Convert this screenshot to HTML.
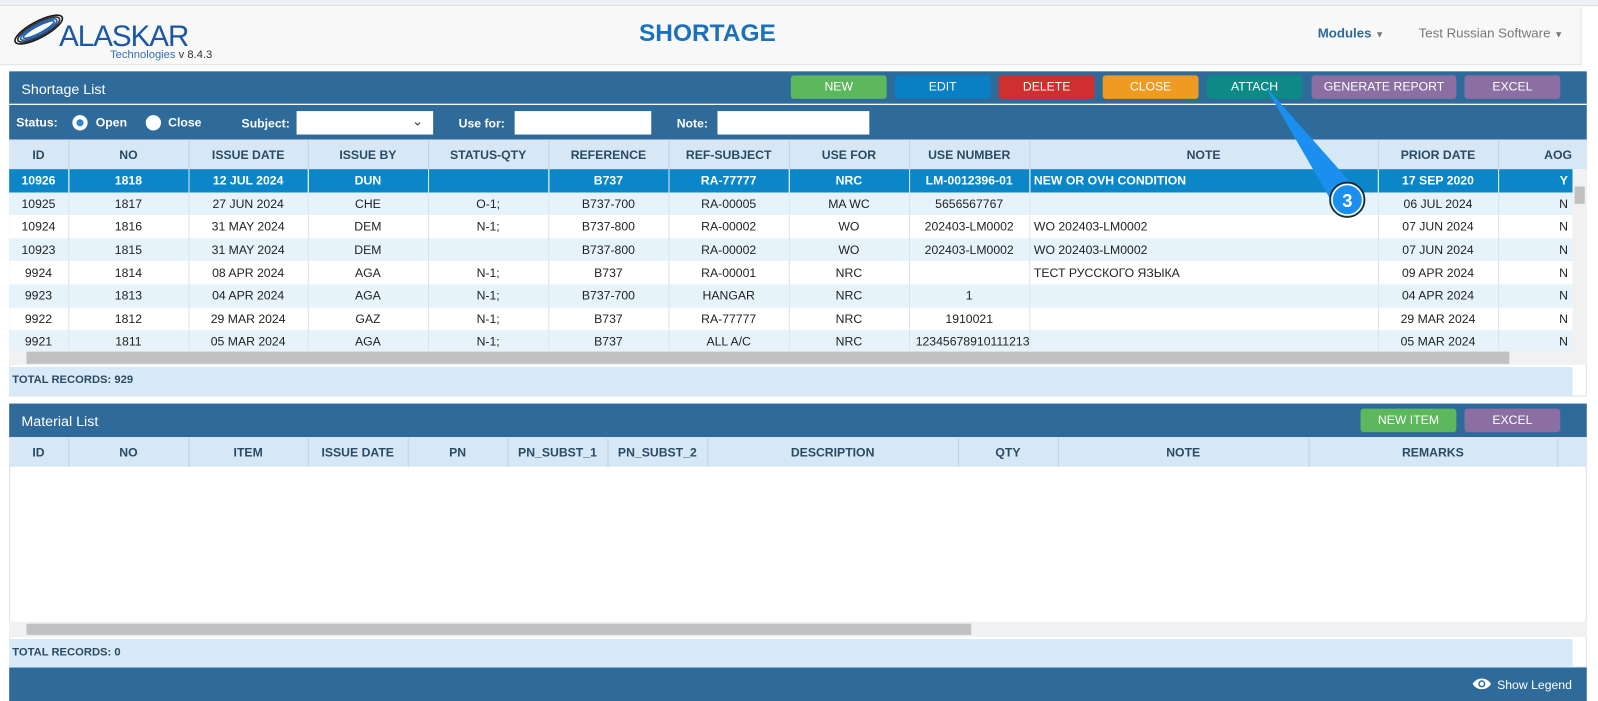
<!DOCTYPE html>
<html><head><meta charset="utf-8"><style>
*{box-sizing:border-box;margin:0;padding:0}
body{width:1598px;height:701px;background:#fff;font-family:"Liberation Sans",Arial,sans-serif;position:relative;overflow:hidden}
#w{position:absolute;left:0;top:0;width:1568px;height:688px;transform:scale(1.01913);transform-origin:0 0}
.abs{position:absolute}
.top{left:0;top:0;width:1568px;height:6px;background:#eef2f6;border-bottom:1px solid #d8dde2}
.hdr{left:0;top:7px;width:1552px;height:57px;background:#f8f8f8;border-bottom:1px solid #e2e2e2;border-right:1px solid #e2e2e2}
.bar{background:#2e6a9a;color:#fff}
.btn{position:absolute;height:23px;border-radius:3px;color:#fff;font-size:12px;text-align:center;line-height:22px}
table{border-collapse:collapse;table-layout:fixed;position:absolute;font-size:12px}
th{background:#d6e8f5;color:#2a4a66;font-weight:bold;border-right:1px solid #bcd0df;text-align:center;height:28px;font-size:12px}
td{text-align:center;border-right:1px solid #d5e3ec;height:22.6px;color:#222;white-space:nowrap;overflow:hidden}
tr.sel td{background:#0b87c9;color:#fff;font-weight:bold}
tr.a td{background:#e6f3fa}
tr.b td{background:#fff}
td.l{text-align:left;padding-left:4px}
</style></head><body><div id="w">
<div class="abs top"></div>
<div class="abs hdr"></div>
<svg class="abs" style="left:8px;top:12px" width="60" height="36" viewBox="0 0 60 36">
<g fill="none" stroke-width="1.6">
<ellipse cx="30" cy="17" rx="26" ry="8" transform="rotate(-28 30 17)" stroke="#1d1d1d"/>
<ellipse cx="30" cy="17" rx="23" ry="6.5" transform="rotate(-28 30 17)" stroke="#333"/>
<ellipse cx="30" cy="17" rx="20" ry="5" transform="rotate(-28 30 17)" stroke="#1f5fae"/>
<ellipse cx="30" cy="17" rx="17" ry="3.5" transform="rotate(-28 30 17)" stroke="#1f5fae"/>
</g></svg>
<div class="abs" style="left:58px;top:20px;font-size:29px;color:#1b57a6;letter-spacing:-1px">ALASKAR</div>
<div class="abs" style="left:108px;top:48px;font-size:11px;color:#3a6fb0">Technologies <span style="color:#333;font-size:11px">v 8.4.3</span></div>
<div class="abs" style="left:627px;top:19px;font-size:24px;font-weight:bold;color:#1c72b8">SHORTAGE</div>
<div class="abs" style="left:1293px;top:25px;font-size:13px;font-weight:bold;color:#2e6a9a">Modules <span style="font-size:9px;color:#777">▼</span></div>
<div class="abs" style="left:1392px;top:25px;font-size:13px;color:#777">Test Russian Software <span style="font-size:9px">▼</span></div>

<div class="abs bar" style="left:9px;top:70px;width:1548px;height:32px;border-bottom:1px solid #6f9cc0"></div>
<div class="abs" style="left:21px;top:79px;color:#fff;font-size:14px">Shortage List</div>
<div class="btn" style="left:776px;top:74px;width:94px;background:#5cb85c">NEW</div>
<div class="btn" style="left:878px;top:74px;width:94px;background:#0a7fc4">EDIT</div>
<div class="btn" style="left:980px;top:74px;width:94px;background:#cf2f2f">DELETE</div>
<div class="btn" style="left:1082px;top:74px;width:94px;background:#ef9a21">CLOSE</div>
<div class="btn" style="left:1184px;top:74px;width:94px;background:#0e8a86">ATTACH</div>
<div class="btn" style="left:1287px;top:74px;width:142px;background:#8b6fa3">GENERATE REPORT</div>
<div class="btn" style="left:1437px;top:74px;width:94px;background:#8b6fa3">EXCEL</div>
<div class="abs bar" style="left:9px;top:103px;width:1548px;height:34px"></div>
<div class="abs" style="left:16px;top:113px;color:#fff;font-size:12px;font-weight:bold">Status:</div>
<div class="abs" style="left:71px;top:113px;width:15px;height:15px;border-radius:50%;background:#fff"><div style="margin:4px;width:7px;height:7px;border-radius:50%;background:#2f87c9"></div></div>
<div class="abs" style="left:94px;top:113px;color:#fff;font-size:12px;font-weight:bold">Open</div>
<div class="abs" style="left:143px;top:113px;width:15px;height:15px;border-radius:50%;background:#fff"></div>
<div class="abs" style="left:165px;top:113px;color:#fff;font-size:12px;font-weight:bold">Close</div>
<div class="abs" style="left:237px;top:114px;color:#fff;font-size:12px;font-weight:bold">Subject:</div>
<div class="abs" style="left:291px;top:109px;width:134px;height:23px;background:#fff"><span style="position:absolute;right:10px;top:2px;color:#444;font-size:13px">⌄</span></div>
<div class="abs" style="left:450px;top:114px;color:#fff;font-size:12px;font-weight:bold">Use for:</div>
<div class="abs" style="left:505px;top:109px;width:134px;height:23px;background:#fff"></div>
<div class="abs" style="left:664px;top:114px;color:#fff;font-size:12px;font-weight:bold">Note:</div>
<div class="abs" style="left:704px;top:109px;width:149px;height:23px;background:#fff"></div>

<div class="abs" style="left:9px;top:137px;width:1548px;height:252px;background:#fff;border:1px solid #dde"></div>
<table style="left:9px;top:138px;width:1534px">
<colgroup><col style="width:58px"><col style="width:118px"><col style="width:117px"><col style="width:118px"><col style="width:118px"><col style="width:118px"><col style="width:118px"><col style="width:118px"><col style="width:118px"><col style="width:342px"><col style="width:118px"><col style="width:73px"></colgroup>
<tr><th>ID</th><th>NO</th><th>ISSUE DATE</th><th>ISSUE BY</th><th>STATUS-QTY</th><th>REFERENCE</th><th>REF-SUBJECT</th><th>USE FOR</th><th>USE NUMBER</th><th>NOTE</th><th>PRIOR DATE</th><th style="text-align:right;padding-right:0">AOG</th></tr>
<tr class="sel"><td>10926</td><td>1818</td><td>12 JUL 2024</td><td>DUN</td><td></td><td>B737</td><td>RA-77777</td><td>NRC</td><td>LM-0012396-01</td><td class="l">NEW OR OVH CONDITION</td><td>17 SEP 2020</td><td style="text-align:right;padding-right:4px">Y</td></tr>
<tr class="a"><td>10925</td><td>1817</td><td>27 JUN 2024</td><td>CHE</td><td>O-1;</td><td>B737-700</td><td>RA-00005</td><td>MA WC</td><td>5656567767</td><td class="l"></td><td>06 JUL 2024</td><td style="text-align:right;padding-right:4px">N</td></tr>
<tr class="b"><td>10924</td><td>1816</td><td>31 MAY 2024</td><td>DEM</td><td>N-1;</td><td>B737-800</td><td>RA-00002</td><td>WO</td><td>202403-LM0002</td><td class="l">WO 202403-LM0002</td><td>07 JUN 2024</td><td style="text-align:right;padding-right:4px">N</td></tr>
<tr class="a"><td>10923</td><td>1815</td><td>31 MAY 2024</td><td>DEM</td><td></td><td>B737-800</td><td>RA-00002</td><td>WO</td><td>202403-LM0002</td><td class="l">WO 202403-LM0002</td><td>07 JUN 2024</td><td style="text-align:right;padding-right:4px">N</td></tr>
<tr class="b"><td>9924</td><td>1814</td><td>08 APR 2024</td><td>AGA</td><td>N-1;</td><td>B737</td><td>RA-00001</td><td>NRC</td><td></td><td class="l">ТЕСТ РУССКОГО ЯЗЫКА</td><td>09 APR 2024</td><td style="text-align:right;padding-right:4px">N</td></tr>
<tr class="a"><td>9923</td><td>1813</td><td>04 APR 2024</td><td>AGA</td><td>N-1;</td><td>B737-700</td><td>HANGAR</td><td>NRC</td><td>1</td><td class="l"></td><td>04 APR 2024</td><td style="text-align:right;padding-right:4px">N</td></tr>
<tr class="b"><td>9922</td><td>1812</td><td>29 MAR 2024</td><td>GAZ</td><td>N-1;</td><td>B737</td><td>RA-77777</td><td>NRC</td><td>1910021</td><td class="l"></td><td>29 MAR 2024</td><td style="text-align:right;padding-right:4px">N</td></tr>
<tr class="a"><td>9921</td><td>1811</td><td>05 MAR 2024</td><td>AGA</td><td>N-1;</td><td>B737</td><td>ALL A/C</td><td>NRC</td><td style="text-align:left;padding-left:6px">1234567891011121314</td><td class="l"></td><td>05 MAR 2024</td><td style="text-align:right;padding-right:4px">N</td></tr>
</table>
<div class="abs" style="left:1543px;top:138px;width:14px;height:28px;background:#d6e8f5"></div>
<div class="abs" style="left:1543px;top:166px;width:14px;height:178px;background:#f1f1f1"><div style="position:absolute;left:2px;top:17px;width:10px;height:17px;background:#c1c1c1"></div></div>
<div class="abs" style="left:9px;top:344px;width:1548px;height:14px;background:#f1f1f1"><div style="position:absolute;left:17px;top:1px;width:1455px;height:12px;background:#c1c1c1"></div></div>
<div class="abs" style="left:9px;top:360px;width:1534px;height:28px;background:#d8eaf7;color:#2a4a66;font-size:11px;font-weight:bold;padding:7px 3px">TOTAL RECORDS: 929</div>

<div class="abs bar" style="left:9px;top:396px;width:1548px;height:33px"></div>
<div class="abs" style="left:21px;top:405px;color:#fff;font-size:14px">Material List</div>
<div class="btn" style="left:1335px;top:401px;width:94px;background:#5cb85c">NEW ITEM</div>
<div class="btn" style="left:1437px;top:401px;width:94px;background:#8b6fa3">EXCEL</div>
<div class="abs" style="left:9px;top:429px;width:1548px;height:226px;background:#fff;border:1px solid #dde"></div>
<table style="left:9px;top:430px;width:1534px">
<colgroup><col style="width:58px"><col style="width:118px"><col style="width:117px"><col style="width:98px"><col style="width:98px"><col style="width:98px"><col style="width:98px"><col style="width:246px"><col style="width:98px"><col style="width:246px"><col style="width:244px"><col style="width:15px"></colgroup>
<tr><th>ID</th><th>NO</th><th>ITEM</th><th>ISSUE DATE</th><th>PN</th><th>PN_SUBST_1</th><th>PN_SUBST_2</th><th>DESCRIPTION</th><th>QTY</th><th>NOTE</th><th>REMARKS</th><th></th></tr>
</table>
<div class="abs" style="left:1543px;top:430px;width:14px;height:28px;background:#d6e8f5"></div>
<div class="abs" style="left:9px;top:610px;width:1548px;height:15px;background:#f1f1f1"><div style="position:absolute;left:17px;top:2px;width:927px;height:11px;background:#c1c1c1"></div></div>
<div class="abs" style="left:9px;top:627px;width:1534px;height:28px;background:#d8eaf7;color:#2a4a66;font-size:11px;font-weight:bold;padding:7px 3px">TOTAL RECORDS: 0</div>
<div class="abs bar" style="left:9px;top:655px;width:1548px;height:33px"></div>
<svg class="abs" style="left:1444px;top:664px" width="20" height="14" viewBox="0 0 20 14"><path d="M1 7C5 0 15 0 19 7C15 14 5 14 1 7Z" fill="#fff"/><circle cx="10" cy="7" r="3.5" fill="#2e6a9a"/><circle cx="10" cy="7" r="2" fill="#fff"/></svg>
<div class="abs" style="left:1469px;top:665px;color:#fff;font-size:12px">Show Legend</div>

<svg class="abs" style="left:0;top:0" width="1568" height="688">
<path d="M1241 84 L1335 190 L1308 200 Z" fill="#1a8ff0"/>
<circle cx="1322" cy="196" r="17" fill="#1a8ff0" stroke="#222" stroke-width="1.5"/>
<circle cx="1322" cy="196" r="15" fill="none" stroke="#fff" stroke-width="1.5"/>
<text x="1322" y="203" text-anchor="middle" font-family="Liberation Sans" font-weight="bold" font-size="18" fill="#fff">3</text>
</svg>
</div></body></html>
